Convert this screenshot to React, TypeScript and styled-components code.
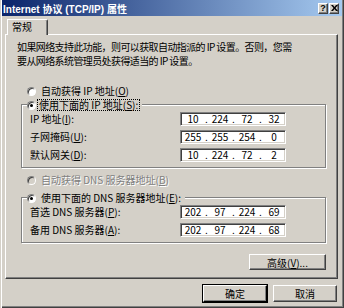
import React from 'react';
import styled, { createGlobalStyle, css } from 'styled-components';

const GlobalStyle = createGlobalStyle`
  html, body {
    margin: 0;
    padding: 0;
    background: #d4d0c8;
  }
  body {
    font-family: "Noto Sans CJK SC", "Liberation Sans", sans-serif;
    font-size: 10px;
    color: #000;
  }
  * {
    box-sizing: border-box;
  }
`;

const raised = css`
  background: #d4d0c8;
  border-top: 1px solid #fff;
  border-left: 1px solid #fff;
  border-right: 1px solid #404040;
  border-bottom: 1px solid #404040;
  box-shadow: inset -1px -1px 0 #808080;
`;

const Window = styled.div`
  width: 344px;
  height: 308px;
  padding: 0 2px 2px 2px;
  background: #d4d0c8;
  box-shadow: inset 1px 0 0 #d4d0c8, inset 2px 0 0 #fff, inset -1px -1px 0 #404040,
    inset -2px -2px 0 #808080;
  display: flex;
  flex-direction: column;
`;

const TitleBar = styled.div`
  height: 16px;
  display: flex;
  align-items: center;
  padding: 0 3px 0 1px;
  background: linear-gradient(to right, #0a246a, #a6caf0);
  color: #fff;
  font-family: "Liberation Sans", "Noto Sans CJK SC", sans-serif;
  font-weight: bold;
  font-size: 10px;
`;

const TitleText = styled.span`
  flex: 1;
  white-space: nowrap;
`;

const TitleButtons = styled.div`
  display: flex;
  gap: 1px;
`;

const TitleButton = styled.div`
  ${raised};
  width: 10px;
  height: 11px;
  display: flex;
  align-items: center;
  justify-content: center;
  color: #000;
  font-family: "Liberation Sans", sans-serif;
  font-size: 9px;
  font-weight: bold;
  line-height: 1;
`;

const Body = styled.div`
  padding: 3px 4px 0 3px;
  display: flex;
  flex-direction: column;
`;

const TabRow = styled.div`
  display: flex;
  padding-left: 2px;
`;

const Tab = styled.div`
  position: relative;
  z-index: 1;
  width: 41px;
  height: 16px;
  margin-bottom: -1px;
  padding-left: 4px;
  background: #d4d0c8;
  border-top: 1px solid #fff;
  border-left: 1px solid #fff;
  border-right: 1px solid #404040;
  border-top-right-radius: 2px;
  box-shadow: inset -1px 0 0 #808080;
  line-height: 14px;
`;

const Panel = styled.div`
  ${raised};
  height: 245px;
  padding: 5px 11px 0 11px;
  display: flex;
  flex-direction: column;
`;

const Intro = styled.p`
  margin: 0;
  line-height: 14px;
  letter-spacing: -0.6px;
  white-space: nowrap;
`;

const RadioRow = styled.div<{ $top: number; $disabled?: boolean }>`
  display: flex;
  align-items: center;
  height: 12px;
  margin-top: ${(p) => p.$top}px;
  padding-left: 10px;
  color: ${(p) => (p.$disabled ? '#808080' : '#000')};
  text-shadow: ${(p) => (p.$disabled ? '1px 1px 0 #fff' : 'none')};
  white-space: nowrap;
`;

const Radio = styled.span<{ $checked?: boolean; $disabled?: boolean }>`
  position: relative;
  flex: none;
  width: 9px;
  height: 9px;
  border-radius: 50%;
  border: 1px solid;
  border-color: #808080 #fff #fff #808080;
  background: ${(p) => (p.$disabled ? '#d4d0c8' : '#fff')};
  box-shadow: inset 1px 1px 0 #404040;
  &::after {
    content: '';
    display: ${(p) => (p.$checked ? 'block' : 'none')};
    position: absolute;
    left: 2px;
    top: 2px;
    width: 3px;
    height: 3px;
    border-radius: 50%;
    background: #000;
  }
`;

const RadioLabel = styled.span<{ $focus?: boolean }>`
  margin-left: ${(p) => (p.$focus ? '1px' : '3px')};
  padding: 0 1px;
  line-height: 10px;
  border: 1px dotted ${(p) => (p.$focus ? '#000' : 'transparent')};
`;

const Group = styled.div<{ $top: number }>`
  position: relative;
  margin: ${(p) => p.$top}px 0 0 4px;
  padding: 7px 8px 5px 8px;
  border: 1px solid #808080;
  box-shadow: inset 1px 1px 0 #fff, 1px 1px 0 #fff;
  display: grid;
  grid-template-columns: 150px 106px;
  row-gap: 4px;
`;

const Legend = styled.div`
  position: absolute;
  top: -6px;
  left: 5px;
  height: 12px;
  padding-right: 2px;
  display: flex;
  align-items: center;
  background: #d4d0c8;
  white-space: nowrap;
`;

const FieldLabel = styled.span`
  line-height: 14px;
  white-space: nowrap;
`;

const IpBox = styled.div`
  width: 106px;
  height: 14px;
  display: flex;
  align-items: center;
  padding-left: 1px;
  background: #fff;
  border-top: 1px solid #808080;
  border-left: 1px solid #808080;
  border-right: 1px solid #fff;
  border-bottom: 1px solid #fff;
  box-shadow: inset 1px 1px 0 #404040, inset -1px -1px 0 #d4d0c8;
  line-height: 12px;
`;

const Octet = styled.span`
  width: 22px;
  text-align: center;
`;

const Dot = styled.span`
  width: 5px;
  text-align: center;
`;

const ButtonRow = styled.div<{ $top: number; $right: number }>`
  display: flex;
  justify-content: flex-end;
  gap: 6px;
  margin-top: ${(p) => p.$top}px;
  padding-right: ${(p) => p.$right}px;
`;

const Button = styled.div<{ $width: number; $height: number; $default?: boolean }>`
  ${raised};
  width: ${(p) => p.$width}px;
  height: ${(p) => p.$height}px;
  display: flex;
  align-items: center;
  justify-content: center;
  white-space: nowrap;
  ${(p) =>
    p.$default &&
    css`
      outline: 1px solid #000;
      outline-offset: 0;
      border-right-color: #000;
      border-bottom-color: #000;
    `}
`;

const CloseIcon = () => (
  <svg width="7" height="6" viewBox="0 0 7 6">
    <path d="M0 0h2l1.5 2 1.5-2h2L4.5 3 7 6H5L3.5 4 2 6H0l2.5-3z" fill="#000" />
  </svg>
);

const IpField = ({ parts }: { parts: string[] }) => (
  <IpBox>
    {parts.map((p, i) => (
      <React.Fragment key={i}>
        {i > 0 && <Dot>.</Dot>}
        <Octet>{p}</Octet>
      </React.Fragment>
    ))}
  </IpBox>
);

const App: React.FC = () => {
  return (
    <>
      <GlobalStyle />
      <Window>
        <TitleBar>
          <TitleText>Internet 协议 (TCP/IP) 属性</TitleText>
          <TitleButtons>
            <TitleButton>?</TitleButton>
            <TitleButton>
              <CloseIcon />
            </TitleButton>
          </TitleButtons>
        </TitleBar>
        <Body>
          <TabRow>
            <Tab>常规</Tab>
          </TabRow>
          <Panel>
            <Intro>
              如果网络支持此功能，则可以获取自动指派的 IP 设置。否则，您需
              <br />
              要从网络系统管理员处获得适当的 IP 设置。
            </Intro>

            <RadioRow $top={17}>
              <Radio />
              <RadioLabel>
                自动获得 IP 地址(<u>O</u>)
              </RadioLabel>
            </RadioRow>

            <Group $top={7}>
              <Legend>
                <Radio $checked />
                <RadioLabel $focus>
                  使用下面的 IP 地址(<u>S</u>):
                </RadioLabel>
              </Legend>
              <FieldLabel>
                IP 地址(<u>I</u>):
              </FieldLabel>
              <IpField parts={['10', '224', '72', '32']} />
              <FieldLabel>
                子网掩码(<u>U</u>):
              </FieldLabel>
              <IpField parts={['255', '255', '254', '0']} />
              <FieldLabel>
                默认网关(<u>D</u>):
              </FieldLabel>
              <IpField parts={['10', '224', '72', '2']} />
            </Group>

            <RadioRow $top={6} $disabled>
              <Radio $disabled />
              <RadioLabel>
                自动获得 DNS 服务器地址(<u>B</u>)
              </RadioLabel>
            </RadioRow>

            <Group $top={11}>
              <Legend>
                <Radio $checked />
                <RadioLabel>
                  使用下面的 DNS 服务器地址(<u>E</u>):
                </RadioLabel>
              </Legend>
              <FieldLabel>
                首选 DNS 服务器(<u>P</u>):
              </FieldLabel>
              <IpField parts={['202', '97', '224', '69']} />
              <FieldLabel>
                备用 DNS 服务器(<u>A</u>):
              </FieldLabel>
              <IpField parts={['202', '97', '224', '68']} />
            </Group>

            <ButtonRow $top={11} $right={0}>
              <Button $width={77} $height={16}>
                高级(<u>V</u>)...
              </Button>
            </ButtonRow>
          </Panel>

          <ButtonRow $top={6} $right={1}>
            <Button $width={64} $height={17} $default>
              确定
            </Button>
            <Button $width={64} $height={17}>
              取消
            </Button>
          </ButtonRow>
        </Body>
      </Window>
    </>
  );
};

export default App;
